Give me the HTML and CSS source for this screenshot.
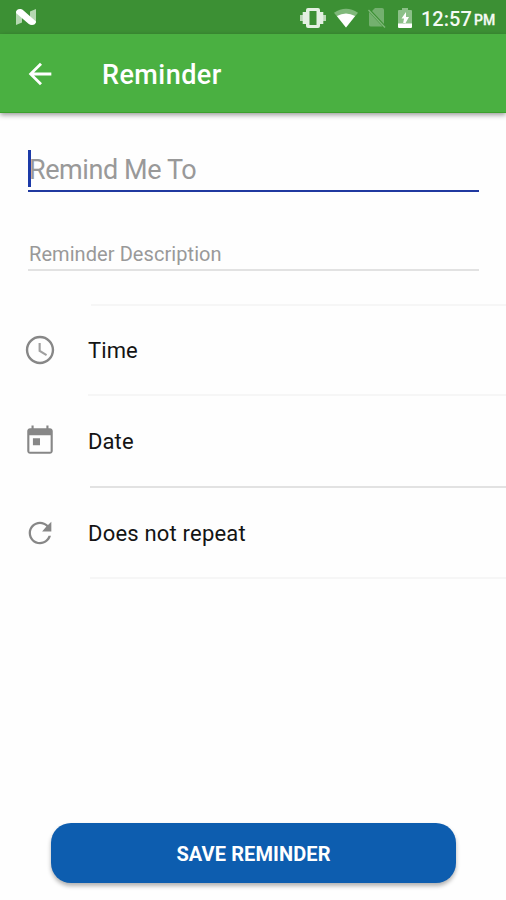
FILE: index.html
```html
<!DOCTYPE html>
<html lang="en">
<head>
<meta charset="utf-8">
<title>Reminder</title>
<link rel="stylesheet" href="styles.css">
</head>
<body>
<div class="screen">
  <div class="status-bar">
    <svg class="n-logo" width="20" height="16" viewBox="0 0 20 16"><path fill="#b5d8b1" d="M0 2 6 1v12.500L0 16zM14 2.500 20 0v14l-6 1z"/><path fill="#fff" d="M0 4Q0 0 4 0 6-.2 7.500 1.500L20 12.500Q19.500 16 16 16 14 16 12.500 14.700z"/></svg>
    <div class="status-icons">
      <svg width="26" height="20" viewBox="0 0 26 20"><g fill="#e4f0e2"><path fill-rule="evenodd" d="M8 0h10q2 0 2 2v16q0 2-2 2H8q-2 0-2-2V2q0-2 2-2zm1.500 3v14h7V3z"/><path d="M2.700 4H6v12H2.700zM20 4h3.300v12H20z"/><path opacity=".75" d="M0 7h3v6H0zM23 7h3v6h-3z"/></g></svg>
      <svg class="wifi" width="24" height="20" viewBox="0 0 25 20"><path fill="#7fb87a" d="M0 4.500Q12.500-4 25 4.500L12.500 20z"/><path fill="#fff" d="M3 8Q12.500 2.500 22 8L12.500 20z"/></svg>
      <svg class="sim" width="18" height="20" viewBox="0 0 18 20"><path fill="#74b06f" d="M7 0h7q2 0 2 2v14L4 3zM1 4 14.500 18.500H3Q1 18.500 1 17z"/><path stroke="#7fb87a" stroke-width="1.300" d="M.5 2 17 19.500"/></svg>
      <svg class="battery" width="14" height="20" viewBox="0 0 14 20"><path fill="#8cc088" d="M4 2V0h6v2h3q1 0 1 1v13H0V3q0-1 1-1z"/><path fill="#fff" d="M0 15.500h14V19q0 1-1 1H1q-1 0-1-1zM8 4 3.500 10.500h2.500L5 16h2l4-7H8z"/></svg>
      <span class="clock">12:57</span><span class="meridiem">PM</span>
    </div>
  </div>
  <header class="app-bar">
    <svg class="icon back" viewBox="0 0 24 24"><path d="M20 11H7.830l5.590-5.590L12 4l-8 8 8 8 1.410-1.410L7.830 13H20z"/></svg>
    <h1 class="title">Reminder</h1>
  </header>
  <main class="form">
    <div class="field field-main"><span class="caret"></span><span class="hint-main">Remind Me To</span></div>
    <div class="field field-desc"><span class="hint-desc">Reminder Description</span></div>
    <div class="options">
      <div class="option time">
        <svg class="icon" viewBox="0 0 24 24"><path d="M11.990 2C6.470 2 2 6.480 2 12s4.470 10 9.990 10C17.520 22 22 17.520 22 12S17.520 2 11.990 2zM12 20.300a8.300 8.300 0 1 1 0-16.600 8.300 8.300 0 0 1 0 16.600z"/><path opacity=".8" d="M12.500 7H11v6l5.250 3.150.750-1.230-4.500-2.670z"/></svg>
        <span class="label">Time</span>
      </div>
      <div class="option date">
        <svg class="icon" viewBox="0 0 24 24"><path d="M19 3h-1V1h-1.500v2h-9V1H6v2H5c-1.110 0-2 .9-2 2v14c0 1.100.890 2 2 2h14c1.100 0 2-.9 2-2V5c0-1.100-.9-2-2-2zm.5 16.500h-15V8h15zM7 10h5v5H7z"/></svg>
        <span class="label">Date</span>
      </div>
      <div class="option repeat">
        <svg class="icon" viewBox="0 0 24 24"><path d="M17.650 6.350C16.200 4.900 14.210 4 12 4c-4.420 0-7.990 3.580-7.990 8s3.570 8 7.990 8c3.730 0 6.840-2.550 7.730-6h-1.700c-.9 2.600-3.200 4.400-6.030 4.400-3.550 0-6.400-2.850-6.400-6.400s2.850-6.400 6.400-6.400c1.770 0 3.350.72 4.500 1.880L13.500 11H20V4z"/></svg>
        <span class="label">Does not repeat</span>
      </div>
    </div>
    <button class="save" type="button">SAVE REMINDER</button>
  </main>
</div>
</body>
</html>
```
FILE: styles.css
```css
* { box-sizing: border-box; }
body { margin: 0; font-family: Roboto, "Liberation Sans", sans-serif; background: #fefefe; }
.screen { width: 506px; height: 900px; display: flex; flex-direction: column; overflow: hidden; }
.status-bar { height: 34px; flex: none; background: #3c9034; display: flex; justify-content: space-between; align-items: flex-start; padding: 8px 10px 0 16px; }
.n-logo { margin-top: 1px; }
.status-icons { display: flex; align-items: flex-start; color: #f4faf3; }
.wifi { margin-left: 8px; }
.sim { margin-left: 10px; }
.battery { margin-left: 12px; }
.clock { width: 53px; margin-left: 9px; font-size: 20px; line-height: 22px; font-weight: 500; }
.meridiem { width: 22px; font-size: 14px; line-height: 24px; font-weight: 500; -webkit-text-stroke: .3px; }
.app-bar { height: 79px; flex: none; background: #4ab041; border-bottom: 1px solid #3ba02c; box-shadow: 0 2px 5px rgba(0, 0, 0, .4); display: flex; align-items: center; padding: 1px 23px 0; }
.icon { width: 34px; height: 34px; flex: none; fill: #878787; }
.back { fill: #fff; }
.title { margin: 3px 0 0 45px; font-size: 27px; line-height: 32px; font-weight: 500; letter-spacing: .45px; color: #fff; }
.form { flex: 1; display: flex; flex-direction: column; }
.field { margin: 0 27px 0 28px; display: flex; color: #999; }
.field-main { height: 43px; margin-top: 36px; border-bottom: 2px solid #2039a0; }
.caret { width: 3px; height: 37px; margin-top: 1px; background: #1c3aa8; }
.hint-main { margin-left: -2px; font-size: 27px; line-height: 42px; letter-spacing: -.42px; }
.field-desc { height: 79px; border-bottom: 2px solid #e2e2e2; align-items: flex-end; }
.hint-desc { margin-left: 1px; font-size: 20px; line-height: 30px; letter-spacing: .07px; }
.options { margin-top: 33px; border-top: 2px solid #f6f6f6; border-image: linear-gradient(to right, transparent 92px, #f6f6f6 92px) 2; }
.option { display: flex; align-items: center; padding-left: 23px; border-bottom: 2px solid; }
.time { height: 90px; border-image: linear-gradient(to right, transparent 89px, #f6f6f6 89px) 2; }
.date { height: 92px; border-image: linear-gradient(to right, transparent 91px, #e2e2e2 91px) 2; }
.date .icon { margin-top: -1px; }
.date .label { margin-top: 1px; }
.repeat { height: 91px; border-image: linear-gradient(to right, transparent 91px, #f6f6f6 91px) 2; }
.repeat .label { letter-spacing: .2px; }
.label { margin: 2px 0 0 31px; font-size: 22px; line-height: 28px; letter-spacing: .1px; color: #141414; }
.save { width: 405px; height: 60px; margin: auto 0 17px 51px; border: 0; border-radius: 20px; background: #0d5daf; box-shadow: 0 3px 4px rgba(0, 0, 0, .3); color: #fff; font: 700 20px/24px Roboto, "Liberation Sans", sans-serif; letter-spacing: .1px; padding: 2px 0 0; }
```
